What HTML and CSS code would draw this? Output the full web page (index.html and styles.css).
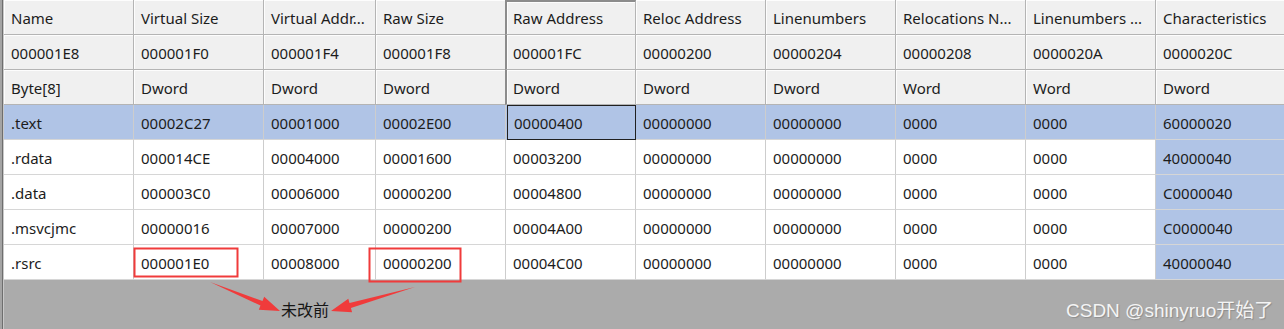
FILE: index.html
```html
<!DOCTYPE html>
<html lang="zh-CN">
<head>
	<meta charset="UTF-8">
	<title>Section Headers</title>
	<link rel="stylesheet" href="styles.css">
</head>
<body>
	<div class="frame">
		<div class="edge"></div>
		<div class="main">
			<div class="sheet">
				<div class="row head">
					<div class="cell">Name</div>
					<div class="cell">Virtual Size</div>
					<div class="cell">Virtual Addr...</div>
					<div class="cell">Raw Size</div>
					<div class="cell cur top">Raw Address</div>
					<div class="cell">Reloc Address</div>
					<div class="cell">Linenumbers</div>
					<div class="cell">Relocations N...</div>
					<div class="cell">Linenumbers ...</div>
					<div class="cell">Characteristics</div>
				</div>
				<div class="row head">
					<div class="cell">000001E8</div>
					<div class="cell">000001F0</div>
					<div class="cell">000001F4</div>
					<div class="cell">000001F8</div>
					<div class="cell cur">000001FC</div>
					<div class="cell">00000200</div>
					<div class="cell">00000204</div>
					<div class="cell">00000208</div>
					<div class="cell">0000020A</div>
					<div class="cell">0000020C</div>
				</div>
				<div class="row head">
					<div class="cell">Byte[8]</div>
					<div class="cell">Dword</div>
					<div class="cell">Dword</div>
					<div class="cell">Dword</div>
					<div class="cell cur">Dword</div>
					<div class="cell">Dword</div>
					<div class="cell">Dword</div>
					<div class="cell">Word</div>
					<div class="cell">Word</div>
					<div class="cell">Dword</div>
				</div>
				<div class="row sel">
					<div class="cell">.text</div>
					<div class="cell">00002C27</div>
					<div class="cell">00001000</div>
					<div class="cell">00002E00</div>
					<div class="cell focus">00000400</div>
					<div class="cell">00000000</div>
					<div class="cell">00000000</div>
					<div class="cell">0000</div>
					<div class="cell">0000</div>
					<div class="cell mark">60000020</div>
				</div>
				<div class="row">
					<div class="cell">.rdata</div>
					<div class="cell">000014CE</div>
					<div class="cell">00004000</div>
					<div class="cell">00001600</div>
					<div class="cell">00003200</div>
					<div class="cell">00000000</div>
					<div class="cell">00000000</div>
					<div class="cell">0000</div>
					<div class="cell">0000</div>
					<div class="cell mark">40000040</div>
				</div>
				<div class="row">
					<div class="cell">.data</div>
					<div class="cell">000003C0</div>
					<div class="cell">00006000</div>
					<div class="cell">00000200</div>
					<div class="cell">00004800</div>
					<div class="cell">00000000</div>
					<div class="cell">00000000</div>
					<div class="cell">0000</div>
					<div class="cell">0000</div>
					<div class="cell mark">C0000040</div>
				</div>
				<div class="row">
					<div class="cell">.msvcjmc</div>
					<div class="cell">00000016</div>
					<div class="cell">00007000</div>
					<div class="cell">00000200</div>
					<div class="cell">00004A00</div>
					<div class="cell">00000000</div>
					<div class="cell">00000000</div>
					<div class="cell">0000</div>
					<div class="cell">0000</div>
					<div class="cell mark">C0000040</div>
				</div>
				<div class="row">
					<div class="cell">.rsrc</div>
					<div class="cell">000001E0</div>
					<div class="cell">00008000</div>
					<div class="cell">00000200</div>
					<div class="cell">00004C00</div>
					<div class="cell">00000000</div>
					<div class="cell">00000000</div>
					<div class="cell">0000</div>
					<div class="cell">0000</div>
					<div class="cell mark">40000040</div>
				</div>
			</div>
			<div class="rest"></div>
		</div>
	</div>

	<!-- red marks drawn over the grid -->
	<svg class="ink" width="1284" height="329" viewBox="0 0 1284 329">
		<rect x="134.5" y="248.5" width="103" height="28" fill="none" stroke="#f03b3b" stroke-width="2"/>
		<rect x="369.5" y="248.5" width="91" height="33" fill="none" stroke="#f03b3b" stroke-width="2"/>
		<polygon fill="#f03b3b" points="210,282 262.5,301 264.2,296.8 280,311 258.8,309.8 260.5,305.6"/>
		<polygon fill="#f03b3b" points="415,287 349.5,303.1 348.3,298.8 331,311 352.1,312.2 350.9,307.9"/>
	</svg>
	<div class="note">未改前</div>
	<div class="wm">CSDN @shinyruo开始了</div>
</body>
</html>
```

FILE: styles.css
```css
html, body {
	margin: 0;
	padding: 0;
	width: 100%;
	height: 100%;
}

body {
	position: relative;
	overflow: hidden;
	background: #ababab;
	font-family: "Noto Sans", "Open Sans", sans-serif;
	font-size: 15px;
	color: #1c1c1c;
}

.frame {
	display: flex;
	height: 329px;
}

.edge {
	flex: none;
	width: 4px;
	background: linear-gradient(to right, #a4a4a4 0, #a4a4a4 2px, #6e6e6e 2px, #6e6e6e 3px, #c9c9c9 3px);
}

.main {
	flex: 1;
	min-width: 0;
	display: flex;
	flex-direction: column;
	overflow: hidden;
}

.sheet {
	flex: none;
}

.row {
	display: grid;
	grid-template-columns: 130px 130px 112px 130px 130px 130px 130px 130px 130px 130px;
	height: 35px;
	background: #fff;
}

.cell {
	box-sizing: border-box;
	display: flex;
	align-items: center;
	padding: 2px 0 0 7px;
	border-right: 1px solid #cdcdcd;
	border-bottom: 1px solid #d6d6d6;
	white-space: nowrap;
	overflow: hidden;
}

/* header rows look like raised buttons */
.row.head {
	background: #f0f0f0;
}
.row.head .cell {
	border-right: 1px solid #b4b4b4;
	border-bottom: 1px solid #b4b4b4;
	box-shadow: inset 1px 1px 0 #fdfdfd;
}
.row.head .cell.cur {
	border-left: 2px solid #8c8c8c;
	margin-left: -1px;
	padding-left: 6px;
}
.row.head .cell.top {
	border-top: 2px solid #8c8c8c;
	padding-top: 0;
}

.row.sel {
	background: #b0c4e6;
}
.cell.mark {
	background: #b0c4e6;
}
.cell.focus {
	border: 1px solid #202020;
	padding: 1px 0 0 6px;
	margin-left: 1px;
}

.rest {
	flex: 1;
	background: #ababab;
}

.ink {
	position: absolute;
	left: 0;
	top: 0;
	pointer-events: none;
}

.note {
	position: absolute;
	left: 281px;
	top: 297px;
	font-family: "Noto Sans CJK SC", sans-serif;
	font-size: 16px;
	color: #161616;
}

.wm {
	position: absolute;
	left: 1066px;
	top: 295px;
	font-family: "Liberation Sans", "Noto Sans CJK SC", sans-serif;
	font-size: 19px;
	color: #f4f4f4;
	text-shadow: 1px 1px 1px #8c8c8c;
}
```
